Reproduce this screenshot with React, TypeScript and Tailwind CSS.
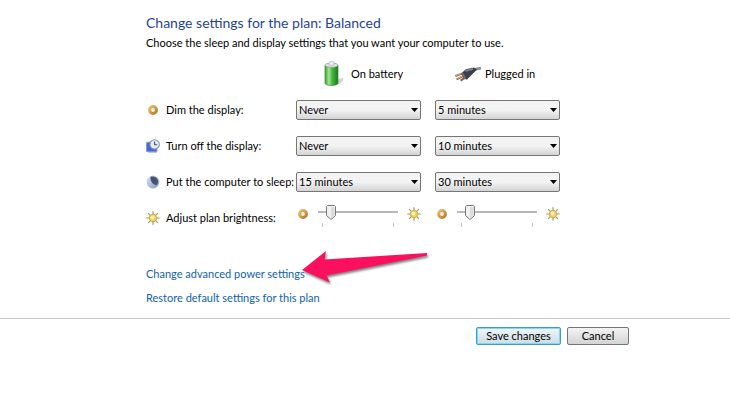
import { useState } from "react";

const DimIcon = () => (
  <svg width="12" height="12" viewBox="0 0 12 12" className="shrink-0">
    <defs>
      <linearGradient id="ring" x1="0" y1="0" x2="1" y2="1">
        <stop offset="0" stopColor="#e9bd6c" />
        <stop offset="1" stopColor="#b87a2a" />
      </linearGradient>
    </defs>
    <circle cx="6" cy="6" r="3.4" fill="#fdf3dc" stroke="url(#ring)" strokeWidth="3" />
  </svg>
);

const SunIcon = () => (
  <svg width="14" height="14" viewBox="0 0 14 14" className="shrink-0">
    <path
      d="M7 0.3V3M7 11v2.7M0.3 7H3M11 7h2.7M2.1 2.1l2 2M9.9 9.9l2 2M11.9 2.1l-2 2M4.1 9.9l-2 2"
      stroke="#a89762"
      strokeWidth="1.2"
    />
    <circle cx="7" cy="7" r="3.7" fill="#f3cf5c" stroke="#cfa340" strokeWidth="0.9" />
    <circle cx="6.6" cy="6.5" r="1.9" fill="#fdf3b8" />
  </svg>
);

const DisplayIcon = () => (
  <svg width="14" height="14" viewBox="0 0 14 14" className="shrink-0">
    <path d="M0.5 3.5L8 2.5l3 7V12.500H0.5Z" fill="#4468d6" stroke="#8c9dd4" />
    <path d="M2 13.5h9l-1-1H3z" fill="#6f86cf" />
    <circle cx="8.6" cy="5.4" r="4.7" fill="#e6edf3" stroke="#8495aa" strokeWidth="1.1" />
    <path d="M8.6 2.400v3.300h2.600" fill="none" stroke="#46566b" strokeWidth="1.1" />
  </svg>
);

const SleepIcon = () => (
  <svg width="14" height="14" viewBox="0 0 14 14" className="shrink-0">
    <defs>
      <linearGradient id="moon" x1="0" y1="0" x2="0.7" y2="1">
        <stop offset="0" stopColor="#dfe6f0" />
        <stop offset="1" stopColor="#8fa4c9" />
      </linearGradient>
    </defs>
    <circle cx="7" cy="7" r="6.4" fill="url(#moon)" />
    <path d="M4.6 1.8C8 0.600 12.400 2.800 12 7c-0.2 1.600-0.8 2.600-1.800 3.200C7 9.600 3.800 6.400 4.600 1.800Z" fill="#45536f" />
  </svg>
);

const BatteryIcon = () => (
  <svg width="20" height="26" viewBox="0 0 20 26" className="shrink-0">
    <defs>
      <linearGradient id="cell" x1="0" y1="0" x2="1" y2="0">
        <stop offset="0" stopColor="#3d9c38" />
        <stop offset="0.3" stopColor="#a4e593" />
        <stop offset="0.55" stopColor="#46b83d" />
        <stop offset="1" stopColor="#1c7a20" />
      </linearGradient>
    </defs>
    <path d="M13 18l6-1c1 2-1 5-6 7z" fill="#d9d2d4" />
    <path d="M1 4.5v18c1 2.6 12 2.6 13 0v-18z" fill="url(#cell)" stroke="#2f8c2f" strokeWidth="0.7" />
    <ellipse cx="7.5" cy="4.2" rx="6.5" ry="2.2" fill="#dfe6e6" stroke="#7d9b83" strokeWidth="0.7" />
    <path d="M5 3.8V1.6c0-1.2 5-1.2 5 0v2.2c-1 0.8-4 0.8-5 0z" fill="#eef1f6" stroke="#99a4b5" strokeWidth="0.6" />
  </svg>
);

const PlugIcon = () => (
  <svg width="28" height="16" viewBox="0 0 28 16" className="shrink-0">
    <path d="M19 4c3-0.4 4-2 8-1.600" fill="none" stroke="#8d9098" strokeWidth="2.6" />
    <path d="M7 7.4L12 3.2 20 1.6 23 3.4 18 8.4 13 13.4 10 13z" fill="#3b3f4b" />
    <path d="M11.5 5l7.5-2" stroke="#858b98" strokeWidth="1.3" />
    <path d="M7 7.4l3.4 5.8 2-0.6L9 6.4z" fill="#6e6870" />
    <path d="M7.6 7.6L1.4 10M9 10.2L2.6 13.4M10 12.4L6.6 14.6" stroke="#8a5a3c" strokeWidth="1.9" />
    <path d="M7 7.6L2 9.5M8.4 10.2L3.4 12.7" stroke="#f0cfa6" strokeWidth="0.8" />
  </svg>
);

const TimeSelect = ({ label, value }: { label: string; value: string }) => (
  <div className="relative">
    <select
      aria-label={label}
      defaultValue={value}
      className="block h-5 w-full appearance-none rounded-xs border border-[#767676] bg-linear-to-b from-[#f3f3f3] from-50% to-[#d4d4d4] to-100% pl-[2px] pr-5 leading-4 text-black"
    >
      <option>Never</option>
      <option>5 minutes</option>
      <option>10 minutes</option>
      <option>15 minutes</option>
      <option>30 minutes</option>
    </select>
    <svg width="7" height="4" viewBox="0 0 7 4" className="pointer-events-none absolute right-[3px] top-2">
      <path d="M0 0h7L3.5 4z" fill="#000" />
    </svg>
  </div>
);

const BrightnessSlider = ({ label }: { label: string }) => {
  const [value, setValue] = useState(11);

  return (
    <div className="flex h-6 items-center pl-px">
      <DimIcon />
      <div className="relative ml-[9px] h-6 w-[81px]">
        <div className="mt-[9px] h-[2px] bg-[#b9b9b9]"></div>
        <div className="mx-1 mt-[10px] flex h-1 justify-between">
          <div className="w-px bg-[#c8c8c8]"></div>
          <div className="w-px bg-[#c8c8c8]"></div>
        </div>
        <svg
          width="10"
          height="15"
          viewBox="0 0 10 15"
          className="absolute top-[3px]"
          style={{ left: `${(value / 100) * 71}px` }}
        >
          <path d="M1.5 0.5h7l1 1v9L5 14.5 0.5 10.5v-9z" fill="#f1f1f1" stroke="#777" />
          <path d="M5 2h3.5v8L5 13z" fill="#dcdcdc" />
        </svg>
        <input
          type="range"
          aria-label={label}
          value={value}
          onChange={(e) => setValue(Number(e.target.value))}
          className="absolute inset-0 h-full w-full cursor-pointer opacity-0"
        />
      </div>
      <div className="ml-[9px]">
        <SunIcon />
      </div>
    </div>
  );
};

const timeRows = [
  { label: "Dim the display:", icon: <DimIcon />, battery: "Never", plugged: "5 minutes" },
  { label: "Turn off the display:", icon: <DisplayIcon />, battery: "Never", plugged: "10 minutes" },
  { label: "Put the computer to sleep:", icon: <SleepIcon />, battery: "15 minutes", plugged: "30 minutes" },
];

const App = () => {
  return (
    <div className="bg-white font-[Lato,'Open_Sans',sans-serif] text-[11px] leading-4 text-black">
      <main className="pl-[146px] pt-[11px]">
        <h1 className="text-sm leading-6 text-[#1f4596]">Change settings for the plan: Balanced</h1>
        <p>Choose the sleep and display settings that you want your computer to use.</p>

        <div className="mt-[5px] flex h-9 items-center pl-[178px]">
          <div className="flex w-[130px] items-center gap-[7px]">
            <BatteryIcon />
            <span>On battery</span>
          </div>
          <div className="flex items-center gap-[3px]">
            <PlugIcon />
            <span>Plugged in</span>
          </div>
        </div>

        {timeRows.map((row) => (
          <div key={row.label} className="flex h-9 items-center">
            <div className="flex w-[150px] items-center gap-[6px] whitespace-nowrap">
              <div className="flex w-[14px] justify-center">{row.icon}</div>
              <span>{row.label}</span>
            </div>
            <div className="grid grid-cols-[125px_125px] gap-x-[14px]">
              <TimeSelect label={`${row.label} on battery`} value={row.battery} />
              <TimeSelect label={`${row.label} plugged in`} value={row.plugged} />
            </div>
          </div>
        ))}

        <div className="flex h-9 items-center">
          <div className="flex w-[150px] items-center gap-[6px] whitespace-nowrap">
            <SunIcon />
            <span>Adjust plan brightness:</span>
          </div>
          <div className="grid grid-cols-[125px_125px] gap-x-[14px] pb-2">
            <BrightnessSlider label="Brightness on battery" />
            <BrightnessSlider label="Brightness plugged in" />
          </div>
        </div>

        <div className="relative mt-[26px] flex flex-col items-start">
          <a href="#" className="leading-6 text-[#0f62ae]">
            Change advanced power settings
          </a>
          <a href="#" className="leading-6 text-[#0f62ae]">
            Restore default settings for this plan
          </a>
          <svg
            width="130"
            height="38"
            viewBox="0 0 130 38"
            className="pointer-events-none absolute -top-3 left-[154px] drop-shadow-[1px_2px_1px_rgba(0,0,0,0.5)]"
          >
            <path d="M2 20L26 1l-1.500 8.500L127 3v2.500L26.500 25.500l3.500 7z" fill="#fb1060" />
          </svg>
        </div>
      </main>

      <footer className="mt-2 flex justify-end gap-[6px] border-t border-[#ccc] pr-[101px] pt-2">
        <button className="h-[18px] w-[85px] rounded-xs border border-[#3c9cc4] bg-linear-to-b from-[#f0f5f7] to-[#cfdde3] leading-4 shadow-[inset_0_0_0_1px_#7fd8f5]">
          Save changes
        </button>
        <button className="h-[18px] w-[62px] rounded-xs border border-[#767676] bg-linear-to-b from-[#f3f3f3] to-[#d4d4d4] leading-4">
          Cancel
        </button>
      </footer>
    </div>
  );
};

export default App;
